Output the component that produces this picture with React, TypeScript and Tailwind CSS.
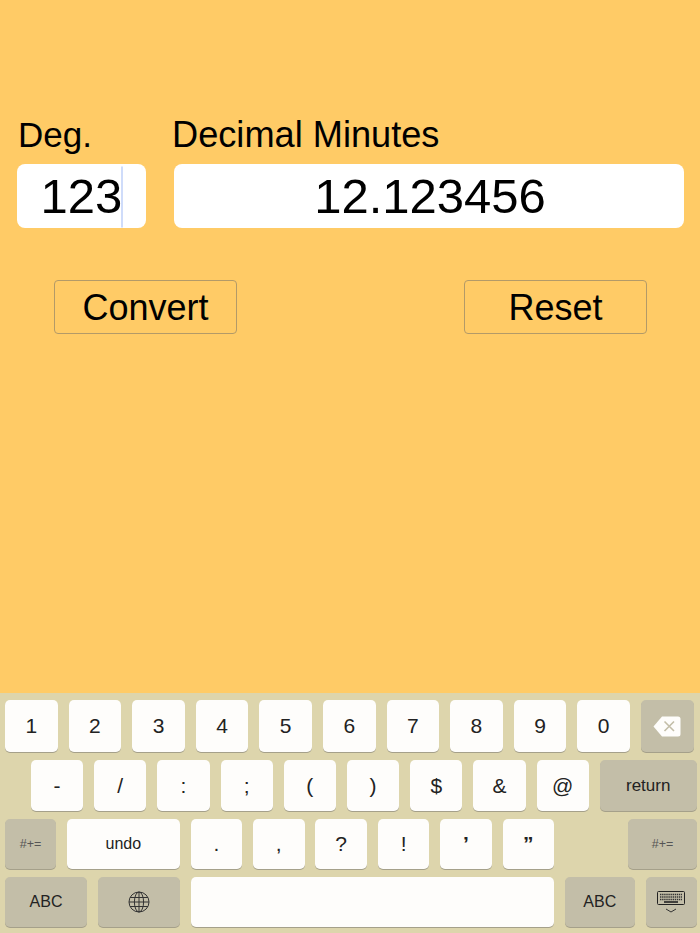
import React from 'react';

const Key: React.FC<{ w: string; dark?: boolean; text?: string; children?: React.ReactNode }> = ({
  w,
  dark,
  text = 'text-[21px]',
  children,
}) => (
  <div
    className={`flex h-full shrink-0 items-center justify-center rounded-[5px] text-[#222] shadow-[0_1px_0_#a5a08a] ${w} ${text} ${
      dark ? 'bg-[#c3bea8]' : 'bg-[#fefdfb]'
    }`}
  >
    {children}
  </div>
);

const BackspaceIcon = () => (
  <svg width="28" height="21" viewBox="0 0 28 21">
    <path d="M9 0.5H25a2.5 2.5 0 0 1 2.5 2.5V18a2.5 2.5 0 0 1-2.5 2.5H9L0.5 10.5Z" fill="#fefdfb" />
    <path d="M11.5 5.5l9.5 9.5M21 5.5l-9.5 9.5" stroke="#c3bea8" strokeWidth="1.6" fill="none" />
  </svg>
);

const GlobeIcon = () => (
  <svg width="22" height="22" viewBox="0 0 22 22" fill="none" stroke="#333" strokeWidth="1">
    <circle cx="11" cy="11" r="10" />
    <ellipse cx="11" cy="11" rx="4.6" ry="10" />
    <path d="M11 1v20M2 6.5h18M1 11h20M2 15.5h18" />
  </svg>
);

const KeyboardIcon = () => (
  <svg width="28" height="22" viewBox="0 0 28 22" fill="none">
    <rect x="0.5" y="0.5" width="27" height="13" rx="1" stroke="#222" />
    <path d="M3 3.5h22M3 6h22M3 8.5h22" stroke="#333" strokeWidth="1.5" strokeDasharray="1.4 0.7" />
    <path d="M7 11h14" stroke="#222" strokeWidth="1.6" />
    <path d="M9 18l5 3 5-3" stroke="#333" />
  </svg>
);

const row1 = ['1', '2', '3', '4', '5', '6', '7', '8', '9', '0'];
const row2 = ['-', '/', ':', ';', '(', ')', '$', '&', '@'];

export default function App() {
  return (
    <div className="flex h-[933px] w-[700px] flex-col overflow-hidden bg-[#ffcb66] font-['Liberation_Sans',Arial,sans-serif] text-black">
      <div className="flex-1 pl-[17px] pt-[114px]">
        <div className="grid grid-cols-[129px_510px] gap-x-[28px]">
          <div className="ml-[1px] h-[50px] text-[35px] leading-[42px]">Deg.</div>
          <div className="-ml-[2px] h-[50px] text-[36.2px] leading-[42px]">Decimal Minutes</div>
          <div className="flex h-[64px] items-center justify-center rounded-[8px] bg-white pt-[2px] text-[49px]">
            <span className="relative">
              123
              <span className="absolute -right-[1px] top-1/2 h-[61px] w-[2px] -translate-y-1/2 bg-[#cfdcfa]" />
            </span>
          </div>
          <div className="flex h-[64px] items-center justify-center rounded-[8px] bg-white pl-[2px] pt-[2px] text-[49px]">
            12.123456
          </div>
        </div>
        <div className="ml-[37px] mt-[52px] flex w-[593px] justify-between">
          <button className="h-[54px] w-[183px] rounded-[4px] border border-[#b39a68] text-[36px]">Convert</button>
          <button className="h-[54px] w-[183px] rounded-[4px] border border-[#b39a68] text-[36px]">Reset</button>
        </div>
      </div>

      <div className="flex h-[240px] flex-col bg-[#ddd5ac] pl-[5px] pt-[7px]">
        <div className="flex h-[52px] gap-[11px]">
          {row1.map((k) => (
            <Key key={k} w="w-[52.6px]">
              {k}
            </Key>
          ))}
          <Key w="w-[53px]" dark>
            <BackspaceIcon />
          </Key>
        </div>
        <div className="mt-[8px] flex h-[51px] gap-[11px] pl-[26px]">
          {row2.map((k) => (
            <Key key={k} w="w-[52.2px]">
              {k}
            </Key>
          ))}
          <Key w="w-[97px]" dark text="text-[17px]">
            return
          </Key>
        </div>
        <div className="mt-[8px] flex h-[50px] gap-[10.8px]">
          <Key w="w-[51px]" dark text="text-[12.5px] text-[#555]">
            #+=
          </Key>
          <Key w="w-[113px]" text="text-[16px]">
            undo
          </Key>
          <Key w="w-[51.6px]">.</Key>
          <Key w="w-[51.6px]">,</Key>
          <Key w="w-[51.6px]">?</Key>
          <Key w="w-[51.6px]">!</Key>
          <Key w="w-[51.6px]">
            <span className="font-bold">’</span>
          </Key>
          <Key w="w-[51.6px]">
            <span className="font-bold">”</span>
          </Key>
          <div className="w-[52.4px] shrink-0" />
          <Key w="w-[69px]" dark text="text-[12.5px] text-[#555]">
            #+=
          </Key>
        </div>
        <div className="mt-[8px] flex h-[50px] gap-[11px]">
          <Key w="w-[82px]" dark text="text-[16px]">
            ABC
          </Key>
          <Key w="w-[82px]" dark>
            <GlobeIcon />
          </Key>
          <Key w="w-[363px]">{null}</Key>
          <Key w="w-[69.5px]" dark text="text-[16px]">
            ABC
          </Key>
          <Key w="w-[51.5px]" dark>
            <KeyboardIcon />
          </Key>
        </div>
      </div>
    </div>
  );
}
